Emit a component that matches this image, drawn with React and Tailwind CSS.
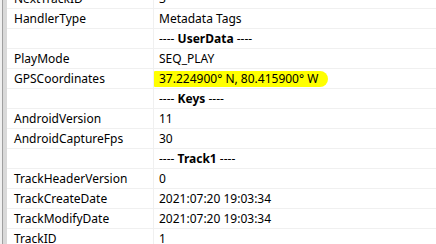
const rows = [
  { k: 'NextTrackID', v: '3' },
  { k: 'HandlerType', v: 'Metadata Tags' },
  { h: 'UserData' },
  { k: 'PlayMode', v: 'SEQ_PLAY' },
  { k: 'GPSCoordinates', v: '37.224900° N, 80.415900° W', mark: true },
  { h: 'Keys' },
  { k: 'AndroidVersion', v: '11' },
  { k: 'AndroidCaptureFps', v: '30' },
  { h: 'Track1' },
  { k: 'TrackHeaderVersion', v: '0' },
  { k: 'TrackCreateDate', v: '2021:07:20 19:03:34' },
  { k: 'TrackModifyDate', v: '2021:07:20 19:03:34' },
  { k: 'TrackID', v: '1' },
];

const App = () => {
  return (
    <div
      className="w-[436px] h-[244px] overflow-hidden bg-white flex text-[12px] text-black"
      style={{ fontFamily: '"Noto Sans", "Open Sans", sans-serif' }}
    >
      {/* window edge */}
      <div className="w-[7px] h-full flex shrink-0">
        <div className="w-[2px] bg-[#f0f0f0]" />
        <div className="w-[1px] bg-[#a0a0a0]" />
        <div className="w-[4px] bg-[#d9d9d9]" />
      </div>

      <div className="flex-1 -mt-[11px]">
        {rows.map((r, i) => (
          <div key={i} className="flex h-[20px] border-b border-[#f0f0f0]">
            <div className="w-[147px] shrink-0 border-r border-[#f0f0f0] pl-[7px] flex items-center leading-none">
              {r.k}
            </div>
            <div className="flex-1 flex items-center pl-[5px] leading-none">
              {r.h ? (
                <span>
                  ---- <span className="font-bold">{r.h}</span> ----
                </span>
              ) : r.mark ? (
                <span className="relative -ml-[5px] pl-[5px] pr-[10px] py-[2px] bg-[#ffff00] rounded-r-[8px] rounded-l-[1px]">
                  {r.v}
                </span>
              ) : (
                r.v
              )}
            </div>
          </div>
        ))}
      </div>
    </div>
  );
};

export default App;
